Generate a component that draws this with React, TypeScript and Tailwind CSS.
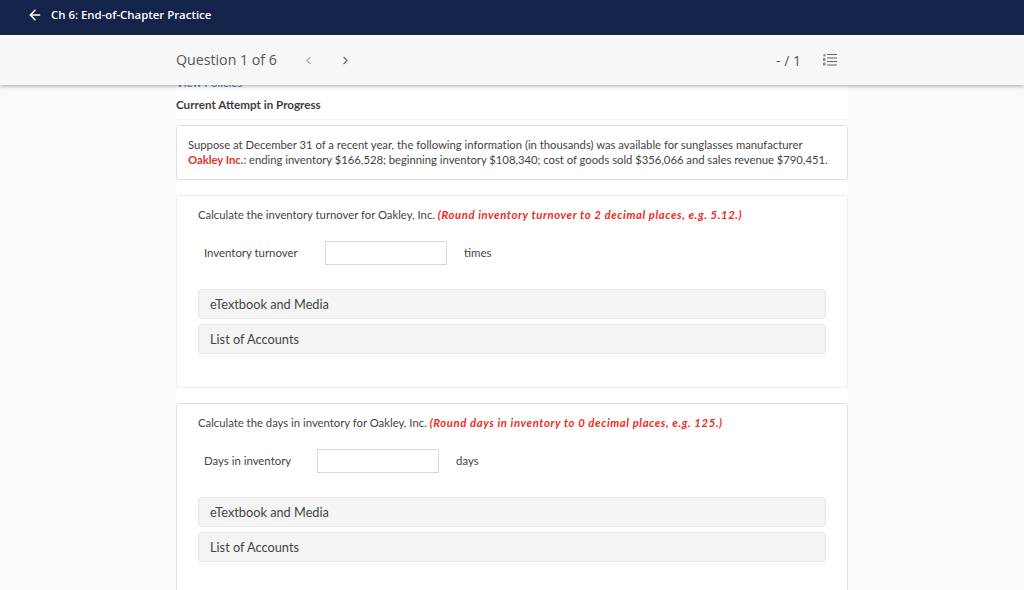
import { ArrowLeft, ChevronLeft, ChevronRight } from 'lucide-react'

function ListIcon() {
  return (
    <svg width="14" height="12" viewBox="0 0 14 12" className="text-[#666]">
      <rect x="4" y="0" width="10" height="1" fill="currentColor" />
      <rect x="4" y="3.5" width="10" height="1" fill="currentColor" />
      <rect x="4" y="7" width="10" height="1" fill="currentColor" />
      <rect x="4" y="10.5" width="10" height="1" fill="currentColor" />
      <rect x="0.5" y="0" width="2" height="2.5" fill="#888" />
      <rect x="0" y="4" width="2.5" height="3" fill="#888" />
      <rect x="0" y="8.5" width="2.5" height="3" fill="#888" />
    </svg>
  )
}

function Accordion({ title }: { title: string }) {
  return (
    <div className="flex h-[30px] items-center rounded-[3px] border border-[#e8e8e8] bg-[#f4f4f4] px-[11px] pt-[1px] text-[12.75px] text-[#444]">
      {title}
    </div>
  )
}

function QuestionCard({
  prompt,
  hint,
  label,
  labelWidth,
  unit,
  borderClass,
}: {
  prompt: string
  hint: string
  label: string
  labelWidth: string
  unit: string
  borderClass: string
}) {
  return (
    <div className={`h-[193px] rounded-[3px] border bg-white px-[21px] pt-[11px] ${borderClass}`}>
      <p className="h-[16px] whitespace-nowrap text-[11.3px] leading-[16px] text-[#444]">
        {prompt}{' '}
        <em className="font-bold tracking-[0.6px] text-[#ee2a24]">{hint}</em>
      </p>
      <div className="mt-[18px] flex items-center pl-[6px] text-[11.4px] text-[#444]">
        <span className={labelWidth}>{label}</span>
        <div className="h-[24px] w-[122px] border border-[#d9d9d9] bg-white" />
        <span className="ml-[17px]">{unit}</span>
      </div>
      <div className="mt-[24px] flex flex-col gap-[5px]">
        <Accordion title="eTextbook and Media" />
        <Accordion title="List of Accounts" />
      </div>
    </div>
  )
}

export default function App() {
  return (
    <div className="flex h-[590px] w-[1024px] flex-col overflow-hidden bg-[#fafafa] font-['Lato',sans-serif]">
      {/* Top bar */}
      <header className="relative z-20 flex h-[35px] shrink-0 items-center gap-[8px] bg-[#14234a] pb-[5px] pl-[27px] font-['Open_Sans',sans-serif] text-[11.4px] font-semibold text-white">
        <ArrowLeft size={16} strokeWidth={2.25} />
        <span>Ch 6: End-of-Chapter Practice</span>
      </header>

      {/* Question nav */}
      <div className="relative z-10 flex h-[50px] shrink-0 items-center bg-[#f7f7f7] pl-[176px] pr-[187px] font-['Open_Sans',sans-serif] shadow-[0_1px_4px_rgba(0,0,0,0.35)]">
        <span className="text-[14.2px] text-[#555]">Question 1 of 6</span>
        <ChevronLeft size={13} className="ml-[25px] text-[#aaa]" />
        <ChevronRight size={13} className="ml-[24px] text-[#666]" />
        <span className="ml-auto text-[14px] text-[#555]">- / 1</span>
        <span className="ml-[22px]">
          <ListIcon />
        </span>
      </div>

      {/* Content */}
      <main className="-mt-[9px] ml-[176px] w-[672px] flex-1 bg-white">
        <a className="block h-[12px] text-[11.5px] leading-[14px] text-[#3d85c6]">View Policies</a>
        <h2 className="mt-[9px] h-[16px] text-[11.65px] font-bold leading-[16px] text-[#3d3d3d]">
          Current Attempt in Progress
        </h2>
        <div className="mt-[6px] h-px bg-[#f5f5f5]" />
        <div className="mt-[5px] flex h-[55px] flex-col justify-center rounded-[3px] border border-[#e0e0e0] px-[11px] pb-[2px] text-[11.3px] leading-[15px] text-[#444]">
          <p className="whitespace-nowrap tracking-[-0.01px]">Suppose at December 31 of a recent year, the following information (in thousands) was available for sunglasses manufacturer</p>
          <p className="whitespace-nowrap tracking-[-0.024px]">
            <span className="font-bold text-[#e0352b]">Oakley Inc.</span>: ending inventory $166,528; beginning inventory $108,340; cost of goods sold $356,066 and sales revenue $790,451.
          </p>
        </div>
        <div className="mt-[15px] flex flex-col gap-[15px]">
          <QuestionCard
            prompt="Calculate the inventory turnover for Oakley, Inc."
            hint="(Round inventory turnover to 2 decimal places, e.g. 5.12.)"
            label="Inventory turnover"
            labelWidth="w-[121px]"
            unit="times"
            borderClass="border-[#ececec]"
          />
          <QuestionCard
            prompt="Calculate the days in inventory for Oakley, Inc."
            hint="(Round days in inventory to 0 decimal places, e.g. 125.)"
            label="Days in inventory"
            labelWidth="w-[113px]"
            unit="days"
            borderClass="border-[#e0e0e0]"
          />
        </div>
      </main>
    </div>
  )
}
